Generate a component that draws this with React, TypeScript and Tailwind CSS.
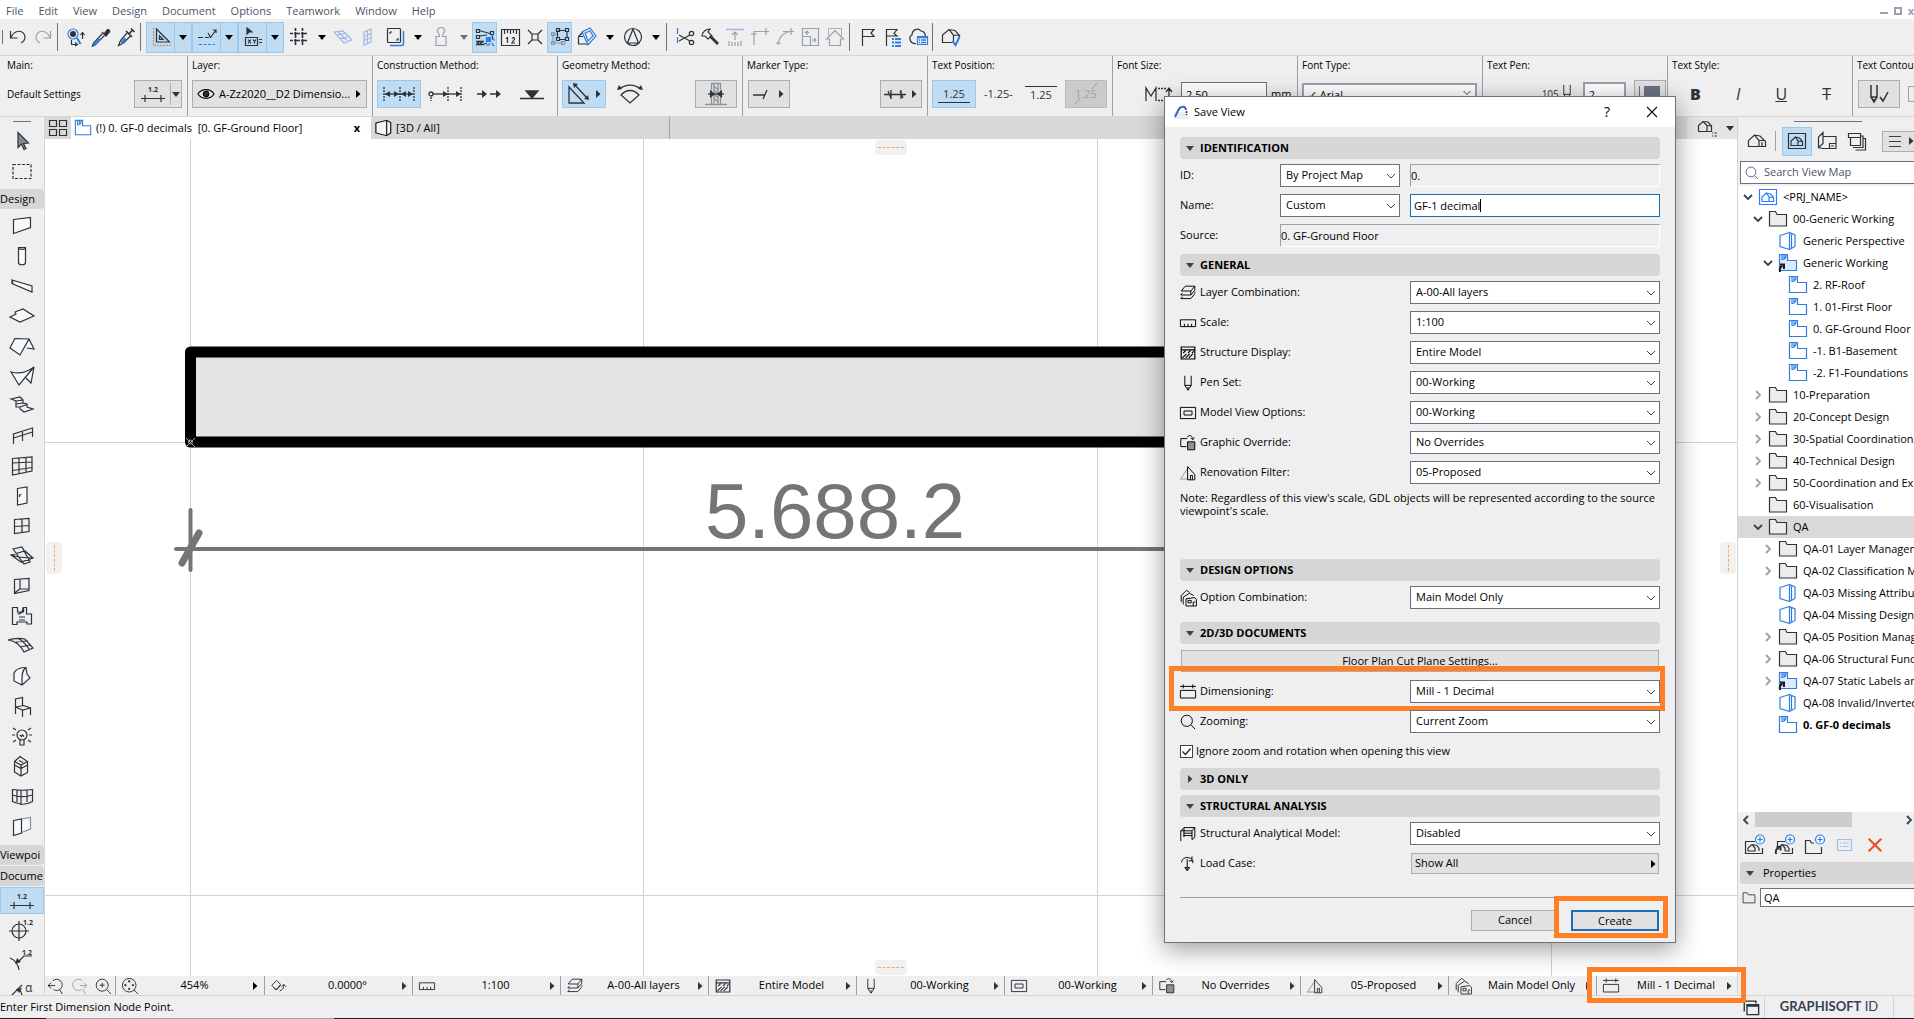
import { useState, type ReactNode } from 'react';

const BLUE = '#2f7de1';
const INK = '#2b333b';

// 20x20 line drawings, stroked with the current text colour
const icons: Record<string, ReactNode> = {
  undo: <path d="M2.500 4v7h7M2.500 11C5 6 9 3.500 13 4.500c4 1.500 5 6 3 9-1 1.500-2 2-3 2.500" />,
  redo: <path d="M17.500 4v7h-7M17.500 11C15 6 11 3.500 7 4.500c-4 1.500-5 6-3 9 1 1.500 2 2 3 2.500" />,
  find: (
    <>
      <circle cx="7" cy="7" r="5" stroke={BLUE} />
      <circle cx="7" cy="7" r="3" fill={INK} stroke="none" />
      <path d="m11 11 3.500 6" stroke={BLUE} strokeWidth="2" />
      <path d="M16.500 12V6m-2 2 2-2.500 2 2.500M5.500 13v4.500H11m-2-2 2.500 2-2.500 1.500" />
    </>
  ),
  dropper: (
    <>
      <path d="m11 5 4 4M13 7l3-4c1-1.500 3.500.5 2.500 2L15 9z" fill={INK} />
      <path d="m11.500 6.500-9 9.500L1.500 19l3-1.500 9-9" />
      <path d="m8.500 12-5.500 6" stroke={BLUE} strokeWidth="3" />
    </>
  ),
  syringe: (
    <>
      <path d="m10 4 6 6M13 7l3.500-4M15 1.500l3.500 3.500" strokeWidth="1.600" />
      <path d="m11 6-6.500 7.500-2 5 5-2.500 7-7" />
      <path d="m9.500 11.500-4 4.500" stroke={BLUE} strokeWidth="3" />
    </>
  ),
  guide: (
    <>
      <path d="M2.500 1v17.500H20" stroke="#e08a3c" strokeDasharray="2 1" />
      <path d="M5.500 2v13h13zM8.500 9v3.500H12z" />
    </>
  ),
  snapguide: (
    <>
      <path d="M1 10.500h5m2 0h4M11 6l2.500 4.500L19 3M16 3h3v3" />
      <path d="M2 17.500h16" stroke={BLUE} strokeDasharray="3 1.500" />
    </>
  ),
  coords: (
    <>
      <path d="M4 1v6l2-2h3zM4 1l5 4" fill={INK} />
      <path d="M2.500 10.500h12v8h-12zM5 12.500l3 4m0-4-3 4m5-4 1.500 2 1.500-2m-1.500 2v2" />
      <path d="M16 12.500h3M16 15.500h3" />
    </>
  ),
  hash: <path d="M6.500 1v4m0 3v4m0 3v4M13.500 1v4m0 3v4m0 3v4M1 6.500h4m3 0h4m3 0h4M1 13.500h4m3 0h4m3 0h4M5 6.500h3m4 0h3M5 13.500h3m4 0h3M6.500 5v3m7-3v3m-7 4v3m7-3v3" strokeWidth="1.600" strokeDasharray="3 1" />,
  gridplane: <path d="m1 5 9-1 9 9-8 3zM5 4.500l10 10M4 8l9-2M7 11.500l9-2" stroke="#9db8e6" />,
  gridwall: <path d="M6 5 13 2v13l-7 3zM9.500 3.500v13M6 9.500 13 6.500M6 13.500l7-3" stroke="#9db8e6" />,
  copies: (
    <>
      <path d="M5 18.500h11.500c1 0 2-1 2-2V4" stroke={BLUE} strokeWidth="1.500" />
      <rect x="2.500" y="1.500" width="13" height="14" rx="1" />
      <path d="M5 5h2M5 5v2m8 4v2h-2" />
    </>
  ),
  stamp: <path d="M5 9.500h3.500C9 7 6.500 6 6.500 4a3.500 3.500 0 0 1 7 0c0 2-2.500 3-2 5.500H15v9H5z" />,
  snapedge: (
    <>
      <path d="m4 3.500 11 3M4 9l8-1M9 17l3-1M17 8l1 5" />
      <path d="M1.500 2.500h3v3h-3zM1.500 8.500h3v3h-3zM15.500 4.500h3v3h-3z" />
      <path d="M1 17.500h8M1 14.500h8M2 17l3-3m0 3 3-3" strokeWidth="1.500" />
      <path d="M11.500 10.500h4v4h-4z" fill={BLUE} stroke={BLUE} />
      <path d="m16.500 16 2.500 3m-7-2v2m6-6h2m-3-4 2-2m-5 9v3" stroke={BLUE} />
    </>
  ),
  ruler12: (
    <>
      <path d="M1.500 2.500h18v16h-18zM4.500 3v4m3-4v3m3-3v4m3-4v3m3-3v4" />
      <path d="m6 11.500 1.500-1V16M12 11.500c1-1.500 3-1 2.500.5L12 16h3" />
    </>
  ),
  snappoint: <path d="M7 7h6v6H7zM3 3l4 4m6 6 4 4M17 3l-4 4m-6 6-4 4" />,
  ghost: (
    <>
      <path d="M3 7v9h10M3 7h4" stroke="#8a99a5" />
      <path d="M1.500 5.500h3v3h-3zm0 9h3v3h-3zm10 0h3v3h-3z" stroke="#8a99a5" />
      <path d="M8 3.500h8M7.500 5v6m9.500-6v6M9 12.500h7" />
      <path d="M6.500 1.500h3v3h-3zm9 0h3v3h-3zm0 9h3v3h-3zm-9 0h3v3h-3z" />
    </>
  ),
  cutplane: (
    <>
      <path d="M1.500 9.500 6 5M1.500 9.500v7.500H12M1.500 9.500H6" />
      <path d="m5 5 8-4 6 8-8 9zM8 6l5-2 3 5-5 5zM8 6l3 8" stroke={BLUE} />
    </>
  ),
  north: <path d="M10 1.500a8.500 8.500 0 1 0 0 17 8.500 8.500 0 0 0 0-17M10 2l5.500 14h-11z" />,
  scissors: (
    <>
      <path d="M2.500 1v16" stroke={BLUE} strokeDasharray="6 3" />
      <path d="m4 8 11 6M4 14l11-6" />
      <circle cx="16.500" cy="6.500" r="2.200" />
      <circle cx="16.500" cy="15.500" r="2.200" />
    </>
  ),
  axe: (
    <>
      <path d="M2 9c0-4 4-7 8-7l-2 3 4 4-4 3-3-3z" />
      <path d="m10 9 8 8" strokeWidth="2.600" />
    </>
  ),
  adjust: (
    <>
      <path d="M1 2.500h18" stroke="#9db8e6" strokeWidth="1.500" />
      <path d="M10 13V5M7 8l3-3 3 3M4 14v5m3-4v4m3-4v4m3-4v4m3-5v5" />
    </>
  ),
  corner: <path d="M4 18V4.500h15M16 1v7M1 7h6" />,
  fillet: <path d="M3 18C4 10 8 5 17 4.500M16 1v7M8 4.500h11M1 16h5" />,
  resize: <path d="M2.500 1.500h16v17h-16zM2.500 9.500h8v9M7 8V4M5 6l2-2 2 2M12 13h4m-2-2 2 2-2 2" />,
  houseup: (
    <>
      <path d="M3.500 9V1.500h13V9" strokeWidth=".8" />
      <path d="m1.500 12 8.500-8.500 8.500 8.500h-3v6.500h-11V12z" />
    </>
  ),
  flag: <path d="M4.500 19V2.500H16l-3 3.500 3 3.500H4.500" />,
  flaglist: (
    <>
      <path d="M3.500 19V2.500H14l-3 4 3 2.500H3.500" />
      <path d="M9 12h2m1 0h6M9 15.500h2m1 0h6M9 19h2m1 0h6" stroke={BLUE} strokeWidth="2" />
    </>
  ),
  cloud: (
    <>
      <path d="M8 16.500C2 17 0 10 4 8c0-5 6-8 9-4 3 0 5 3 4 6" />
      <path d="M9.500 9.500h10v8h-10z" stroke={BLUE} />
      <path d="M9.500 10.500h10M11 13h1m1 0h5m-7 2.500h1m1 0h5" stroke={BLUE} strokeWidth="1.500" />
    </>
  ),
  house: <path d="M1.500 15.500V9.500L7.500 4 12 9.500v6zM7.500 4 13 5l5.500 5.500v5H12M12 9.500l5.500 0M15 11v4.500" />,
  housecheck: (
    <>
      <path d="M11.500 15.500h-10V8L8 2.500 12.500 8v7.500M8 2.500l6 1 4.500 5v2M12.500 8l6 .5" />
      <path d="m11.500 14 3 4 4-8" stroke={BLUE} strokeWidth="2" />
    </>
  ),
  arrow: <path d="M6 1.500v15l3.500-3.500 2.500 5.500 2-1-2.500-5 5-.5z" fill="#868c91" />,
  marquee: <path d="M1 3.500h18v14H1z" strokeDasharray="3 1.500" />,
  wall: <path d="m1.500 3.500 17-2v10l-17 6z" fill="#f8f9fa" />,
  column: (
    <>
      <path d="M6.500 1.500v15c0 3 7 3 7 0v-15z" fill="#f8f9fa" />
      <path d="M6.500 2.500c2 1 5 1 7 0" />
    </>
  ),
  beam: <path d="m0 4 20 6v6L1 8zM0 4v4" fill="#f8f9fa" />,
  slab: <path d="m-2 11 6-3-1-2 8-3 11 7-14 6z" fill="#f8f9fa" />,
  roof: <path d="M3 2.500-2 12l10 7 9-16zM17 3l5 10-7-1" fill="#f8f9fa" />,
  shell: <path d="m-1 6 8 13L22 1C14 7 6 8-1 6zM22 1l-3 16-5-5" fill="#f8f9fa" />,
  stair: <path d="m-1 3 9-2 3 3v3l4 1v3l6 2-9 3-4-3v-2l-4 0V8H4V5zM4 5l7-1M8 11l7-2.500M4 8l7-1" />,
  railing: <path d="M1.500 18V8l19-6v9M1.500 12l19-6M10.500 6v9" />,
  curtain: <path d="M.500 2.500 20 1v14L.500 19zM.500 7 20 6M.500 14.500 20 11.500M7 2v15.500M14 2v14" />,
  door: <path d="M5.500 2.500 15 1v16l-9.500 2zM7.500 11v-2l2-.500" fill="#f8f9fa" />,
  window: <path d="M2.500 3.500 17 2.500v13l-14.500 2zM2.500 10.500l14.500-1M10 3v13.500" />,
  skylight: <path d="m-1 9 14-4 8 7-12 4zM1 3l9-2 8 15-6 2zM-1 9c6 2 15 3 22 3" />,
  opening: <path d="M2.500 3.500 17 2.500v12l-14.500 3zM8 3v10h9M8 13l-5.500 4" />,
  zone: <path d="M.500 1.500h5V6h6V1.500h3V8h5v10H15v-2H5v2.500H.500zM7 11h6M7 14h6M5.500 8C9 8 11 6 11 1.500" />,
  mesh: <path d="M-4 4c6-2 12-2 17-1l8 9-9 4C8 9 4 5-4 4zM4 6l12-1M8 11l10-2M6 2.500C12 5 13 8 17 13" />,
  morph: <path d="M2 7C4 3 8 1.500 14 1.500L15 8l3 4-8 7-8-4zM14 1.500C9 5 10 12 10 19" fill="#f8f9fa" />,
  chair: <path d="M3.500 18V3l7-1.500V10M3.500 11l8-1.500L18.500 12v7M3.500 11l7 3 8-2M10.500 14v7" />,
  lamp: (
    <>
      <circle cx="10" cy="9" r="5" />
      <path d="M8 13.500V19h4v-5.500M8 9l1.500 1.500L10.500 9l1.500 1.500M1 2l3 2M0 9h3M1 16l3-2M19 2l-3 2M20 9h-3M19 16l-3-2" />
    </>
  ),
  cabinet: <path d="M2.500 5.500 8 .500l7.500 5v11L9 20l-6.500-4zM2.500 5.500 9 9l6.500-3.500M9 9v11M2.500 9l6.500 3.500L15.500 9M7 4.500l4 2" />,
  curvewall: <path d="M.500 3.500c6 1 13 1 20 0v12c-5 3-8 3-11 3l-9-3zM.500 9c6 2 13 2 20 0M5 4v12M9 4v14M15 4v12" />,
  wallend: (
    <>
      <path d="m9.500 3 9-1.500V13l-9 3.500" stroke="#8d9297" fill="#f8f9fa" />
      <path d="m1.500 4.500 8-1.500v14l-8 2.500z" fill="#f8f9fa" />
    </>
  ),
  layers: <path d="m1.500 7.500 5-6h12l-5 6zM3 10l-2 2.500h12.500l5-6M3 14.500 1 17h12.500l5-6M13.500 7.500v5M18.500 1.500v5m0 4v-2" />,
  scale: <path d="M.500 6h19v8.500H.500zM5.500 11v3.500M10 11v3.500M14.500 11v3.500" />,
  structure: <path d="M1.500 2.500h17v15h-17zM1.500 6h17M3 16l5-5m-1 5 5-5m-1 5 5-5M4 10l3-3m3 3 3-3m2 3 2-2" strokeWidth="1.500" />,
  pen: <path d="M6 1v12l4 6 4-6V1M6 13h8M10 15v4" />,
  modelview: <path d="M.500 3h19v14H.500zM5 7.500h10v5H5z" />,
  override: (
    <>
      <path d="M8 14.500H1v-10h8M9 2.500c3-3 6-2 7 2m-2.500-1 2.500 2.500L18 3" />
      <path d="M9.500 8.500h9v10h-9z" fill="#8d9297" />
    </>
  ),
  renovation: (
    <>
      <path d="M0 17.500h9M1 17 9 5" stroke="#8d9297" />
      <path d="M9.500 18.500V2l9 10v6.500zM13 18v-5h2.500v5" />
    </>
  ),
  options: <path d="M1.500 15V7L8 .500l4 2.500M4 18V9l8-5 5 3M7.500 20V11l11-1.500 2 2V20zM10 13h4v3h-4zM16.500 20v-5H19" />,
  dimension: <path d="M0 3h20M4 .500v5M16 .500v5M.500 8h19v9.500H.500z" />,
  zoom: <path d="M8.500 1.500a7 7 0 1 0 0 14 7 7 0 0 0 0-14M14 14l5 5" />,
  analytic: <path d="M1 19V6l4-4h13.500v12L15 17V6M1 6h14M5 2v12M4 9h11M4 12h11M18.500 2 15 6" />,
  loadcase: <path d="M2 8C2 2 10 0 15 4m0-3.500V6h-4M9 4v14m-3-3.500 3 4 3-4zM16 9V5" />,
  folder: <path d="M1.500 17V2.500h6l1.500 3h9.500V17z" fill="#ececee" />,
  persp: <path d="M2 4.500 11.500 1.500v17L2 15.500zM11.500 1.500 17 4v11.500l-5.500 3M13.500 2.500v15" stroke={BLUE} />,
  plan: (
    <>
      <path d="M1.500 17.500v-16h8v6h9v10z" stroke={BLUE} fill="#fff" />
      <path d="M4 2v4.500C6 6.500 8 5 8 2M6 2v3" stroke={BLUE} />
    </>
  ),
  planlink: (
    <>
      <path d="M1.500 17.500v-16h8v6h9v10z" stroke={BLUE} fill="#dcebfb" />
      <path d="M4 2v4.500C6 6.500 8 5 8 2M6 2v3" stroke={BLUE} />
      <path d="M2 19c-.500-4 0-5 2.500-6M2 11.500h4V16" stroke="#1b1f23" strokeWidth="2" />
    </>
  ),
  viewmap: <path d="M1.500 2.500h17v15h-17zM4 14.500V10l4.500-4 2.500 4v4.500zM8.500 6l4 1 3 3.500v4H11M11 10l4 .5" />,
  layout: <path d="M1.500 16.500V6L6 1.500v11zM6 5.500h13v12H6l-4.500-1M12.500 17.500v-5H19M14 15h3" />,
  publisher: <path d="M1.500 2.500h12v4h-12zM3.500 6.500v8h10v-8M13.500 5h2.500v11.500H6M16 7.500h2.500V19H8.500" />,
  popnav: <path d="M1.500 13.500V7.500L6 3.500l4 4v6zM6 3.500l5 .500 3.500 4v5.500H10M10 7.500l4 .500M15 15h1m1.500 0h2.500m-5 3h1m1.500 0h2.500" />,
  addview: (
    <>
      <path d="M11 6.500H1.500v12h17V13M4 16v-3l4-3.500 3 3.500v3zM8 9.500l5 1 2 3V16" />
      <circle cx="16" cy="4.500" r="4.500" stroke={BLUE} fill="#f4f8fd" />
      <path d="M16 2v5M13.500 4.500h5" stroke={BLUE} />
    </>
  ),
  cloneview: (
    <>
      <path d="M11 6.500H3.500v5m4 7h11V13M8 9.500l5 1 2 3V16h-4m-5-5 2-1.500 3 3.500v3" />
      <path d="M2 19c-.500-4 0-5 3-6M2.500 12h4v3.500" strokeWidth="2" />
      <circle cx="16" cy="4.500" r="4.500" stroke={BLUE} fill="#f4f8fd" />
      <path d="M16 2v5M13.500 4.500h5" stroke={BLUE} />
    </>
  ),
  addfolder: (
    <>
      <path d="M10 8H7.500L6 5.500H1.500v13h16V12" />
      <circle cx="16" cy="4.500" r="4.500" stroke={BLUE} fill="#f4f8fd" />
      <path d="M16 2v5M13.500 4.500h5" stroke={BLUE} />
    </>
  ),
  props: <path d="M3.500 4.500h14v11h-14zM6 8h1.500M9 8h6M6 11.500h1.500M9 11.500h6" stroke="#9dbff0" />,
  cross: <path d="m1 1 18 18M19 1 1 19" stroke="#e8502a" strokeWidth="3" />,
  windows: <path d="M5.500 7.500h13v11h-13zM5.500 9h13M2.500 15V3.500h13V6" strokeWidth="1.500" />,
  zoomback: <path d="M6 3.500a7 7 0 1 1 1 11M0 9.500h9M4 6l-4 3.500L4 13M14.500 14.500 18 20" />,
  zoomfwd: <path d="M14 3.500a7 7 0 1 0-1 11M11 9.500h9M16 6l4 3.500-4 3.500M14.500 14.500 18 20" />,
  zoomin: <path d="M9 1.500a7.500 7.500 0 1 0 0 15 7.500 7.500 0 0 0 0-15M14.500 14.500 20 20M9 6v6M6 9h6" />,
  zoomfit: <path d="M9 .500a8.500 8.500 0 1 0 0 17 8.500 8.500 0 0 0 0-17M15 15l5 5M9 3v3M9 12v3M3 9h3M12 9h3M8 5l1-2 1 2M8 13l1 2 1-2M5 8 3 9l2 1M13 8l2 1-2 1" />,
  orient: <path d="m1 9 6-6 5 5-6 7zM4 12l3 3 5-6M11 16c4-1 5-4 5-8m-3 3 3-3 3 3" />,
  grid4: <path d="M1.500 2.500h7v6h-7zm10 0h7v6h-7zm-10 9h7v6h-7zm10 0h7v6h-7z" />,
  box3d: <path d="M1 4.500 13 1.500v17L1 15.500zM13 1.500 17.500 4v11.500l-4.500 3" fill="#f4f4f4" />,
  eye: (
    <>
      <path d="M1 10c4-6.500 14-6.500 18 0-4 6.500-14 6.500-18 0z" />
      <circle cx="10" cy="10" r="3" fill={INK} />
    </>
  ),
  penset: <path d="M2 1v12l3 5 3-5V1M2 13h6M5 15v3M11 13l3 4 5-9" strokeWidth="1.500" />,
};

const sizes: Record<number, string> = {
  14: 'size-[14px]',
  16: 'size-4',
  18: 'size-[18px]',
  20: 'size-5',
};

function Icon({ name, size = 20 }: { name: string; size?: number }) {
  return (
    <svg viewBox="0 0 20 20" className={`${sizes[size]} shrink-0 overflow-visible`} fill="none" stroke="currentColor" strokeWidth="1.2">
      {icons[name]}
    </svg>
  );
}

function Caret({ dir = 'down' }: { dir?: 'down' | 'right' }) {
  return (
    <svg viewBox="0 0 8 8" className="size-2 shrink-0" fill="currentColor">
      <path d={dir === 'down' ? 'M0 2h8L4 7z' : 'M2 0l4.500 4L2 8z'} />
    </svg>
  );
}

const menus = ['File', 'Edit', 'View', 'Design', 'Document', 'Options', 'Teamwork', 'Window', 'Help'];

function MenuBar() {
  return (
    <nav className="flex h-[19px] shrink-0 items-center gap-[15px] bg-white pt-[3px] pl-[6px] text-[11px] leading-4 text-gray-600">
      {menus.map((m) => (
        <button key={m} type="button">{m}</button>
      ))}
      <div className="ml-auto flex items-center gap-[6px] text-gray-400">
        <button type="button" aria-label="Minimize" className="mt-1 h-[2px] w-2 bg-gray-400" />
        <button type="button" aria-label="Restore" className="size-2 border-2 border-gray-400" />
        <button type="button" aria-label="Close" className="text-[11px] leading-4 font-bold">x</button>
      </div>
    </nav>
  );
}

type Tool = { icon?: string; kind: 'btn' | 'sep' | 'split' | 'drop'; on?: boolean; dim?: boolean };

const tools: Tool[] = [
  { icon: 'undo', kind: 'btn' },
  { icon: 'redo', kind: 'btn', dim: true },
  { kind: 'sep' },
  { icon: 'find', kind: 'btn' },
  { icon: 'dropper', kind: 'btn' },
  { icon: 'syringe', kind: 'btn' },
  { kind: 'sep' },
  { icon: 'guide', kind: 'split' },
  { icon: 'snapguide', kind: 'split' },
  { icon: 'coords', kind: 'split' },
  { icon: 'hash', kind: 'drop' },
  { icon: 'gridplane', kind: 'btn' },
  { icon: 'gridwall', kind: 'btn' },
  { icon: 'copies', kind: 'drop' },
  { icon: 'stamp', kind: 'drop', dim: true },
  { icon: 'snapedge', kind: 'btn', on: true },
  { icon: 'ruler12', kind: 'btn' },
  { icon: 'snappoint', kind: 'btn' },
  { icon: 'ghost', kind: 'btn', on: true },
  { icon: 'cutplane', kind: 'drop' },
  { icon: 'north', kind: 'drop' },
  { kind: 'sep' },
  { icon: 'scissors', kind: 'btn' },
  { icon: 'axe', kind: 'btn' },
  { icon: 'adjust', kind: 'btn', dim: true },
  { icon: 'corner', kind: 'btn', dim: true },
  { icon: 'fillet', kind: 'btn', dim: true },
  { icon: 'resize', kind: 'btn', dim: true },
  { icon: 'houseup', kind: 'btn', dim: true },
  { kind: 'sep' },
  { icon: 'flag', kind: 'btn' },
  { icon: 'flaglist', kind: 'btn' },
  { icon: 'cloud', kind: 'btn' },
  { kind: 'sep' },
  { icon: 'housecheck', kind: 'btn' },
];

function Toolbar() {
  return (
    <div className="flex h-[37px] shrink-0 items-center border-b border-[#d5d5d5] bg-[#efefef]">
      <span className="mr-[2px] ml-[2px] h-[14px] w-px bg-gray-500" />
      {tools.map((t, i) => {
        if (t.kind === 'sep') {
          return <span key={i} className="mr-[5px] ml-[2px] h-[28px] w-px bg-gray-500" />;
        }
        const color = t.dim ? 'text-gray-400' : 'text-[#2b333b]';
        if (t.kind === 'btn') {
          return (
            <button
              key={i}
              type="button"
              aria-label={t.icon}
              className={`flex h-[31px] w-[25px] items-center justify-center ${color} ${t.on ? 'border border-[#99c9ee] bg-[#bfdcf3]' : ''}`}
            >
              <Icon name={t.icon!} />
            </button>
          );
        }
        const split = t.kind === 'split';
        return (
          <button
            key={i}
            type="button"
            aria-label={t.icon}
            className={`flex h-[31px] w-[46px] items-center ${color} ${split ? 'border border-[#99c9ee] bg-[#bfdcf3]' : ''}`}
          >
            <span className={`flex h-full flex-1 items-center justify-center ${split ? 'border-r border-[#99c9ee]' : ''}`}>
              <Icon name={t.icon!} />
            </span>
            <span className={`flex w-4 justify-center ${t.dim ? 'text-gray-500' : 'text-black'}`}>
              <Caret />
            </span>
          </button>
        );
      })}
    </div>
  );
}

function InfoCell({ label, children }: { label: string; children: ReactNode }) {
  return (
    <section className="flex h-full w-[185px] shrink-0 flex-col border-l border-gray-400 pt-[2px] pl-1">
      <h2 className="text-[10px] leading-[14px] whitespace-nowrap text-black">{label}</h2>
      <div className="mt-2 flex h-7 items-center pr-[5px]">{children}</div>
    </section>
  );
}

const grayBtn = 'flex h-7 shrink-0 items-center justify-center border border-[#adadad] bg-[#e1e1e1]';
const blueBtn = 'flex h-7 w-11 shrink-0 items-center justify-center gap-1 border border-[#99c9ee] bg-[#bfdcf3]';

function DimGlyph() {
  return (
    <svg viewBox="0 0 24 20" className="h-5 w-6" fill="none" stroke="currentColor" strokeWidth="1.2">
      <path d="M0 14.500h24M4 11v7m16-7v7" />
      <text x="12" y="8" textAnchor="middle" fontSize="7" fontWeight="700" fill="currentColor" stroke="none">1.2</text>
    </svg>
  );
}

function InfoBox() {
  return (
    <div className="flex h-[61px] shrink-0 overflow-hidden border-b border-[#d5d5d5] bg-[#efefef] text-[#2b333b]">
      <section className="flex w-[187px] shrink-0 flex-col pt-[2px] pl-[7px]">
        <h2 className="text-[10px] leading-[14px] text-black">Main:</h2>
        <div className="mt-2 flex h-7 items-center justify-between pr-[5px] text-[10px] text-black">
          Default Settings
          <button type="button" aria-label="Default settings" className={`${grayBtn} w-12 text-[#2b333b]`}>
            <span className="flex w-[35px] justify-center"><DimGlyph /></span>
            <span className="flex h-[22px] flex-1 items-center justify-center border-l border-[#adadad]"><Caret /></span>
          </button>
        </div>
      </section>
      <InfoCell label="Layer:">
        <button type="button" className={`${grayBtn} w-full gap-1 px-1 text-[11px] whitespace-nowrap text-black`}>
          <Icon name="eye" size={18} />
          <span className="flex-1 text-left">A-Zz2020__D2 Dimensio...</span>
          <Caret dir="right" />
        </button>
      </InfoCell>
      <InfoCell label="Construction Method:">
        <button type="button" aria-label="Linear" className={blueBtn}>
          <svg viewBox="0 0 32 16" className="h-4 w-8" fill="none" stroke="currentColor" strokeWidth="1.300">
            <path d="M1 1v14M17 1v14M31 1v14" strokeDasharray="2 1" />
            <path d="M2 8h28" />
            <path d="m2 8 5-3v6zM16 8l-5-3v6zM18 8l5-3v6zM30 8l-5-3v6z" fill="currentColor" stroke="none" />
          </svg>
        </button>
        <button type="button" aria-label="Cumulative" className="ml-1 flex w-10 justify-center">
          <svg viewBox="0 0 34 16" className="h-4 w-[34px]" fill="none" stroke="currentColor" strokeWidth="1.300">
            <circle cx="3" cy="8" r="2" />
            <path d="M3 11v4M20 1v14M33 1v14" strokeDasharray="2 1" />
            <path d="M5 8h27" />
            <path d="m20 8-5-3v6zM33 8l-5-3v6z" fill="currentColor" stroke="none" />
          </svg>
        </button>
        <button type="button" aria-label="Baseline" className="ml-1 flex w-10 justify-center">
          <svg viewBox="0 0 24 16" className="h-4 w-6" fill="none" stroke="currentColor" strokeWidth="1.300">
            <path d="M0 8h8M13 8h8" />
            <path d="m10 8-5-4v8zM24 8l-5-4v8z" fill="currentColor" stroke="none" />
          </svg>
        </button>
        <button type="button" aria-label="Elevation" className="ml-1 flex w-10 justify-center">
          <svg viewBox="0 0 24 16" className="h-4 w-6" fill="currentColor" stroke="currentColor" strokeWidth="1.300">
            <path d="M0 12.500h24M6 5h12l-6 7z" />
          </svg>
        </button>
      </InfoCell>
      <InfoCell label="Geometry Method:">
        <button type="button" aria-label="Any direction" className={blueBtn}>
          <svg viewBox="0 0 24 22" className="h-[22px] w-6" fill="none" stroke="currentColor" strokeWidth="1.300">
            <path d="M3 4v16h15zM9 2l12 13" />
            <path d="m7 0 5 1-4 4zM23 17l-5-1 4-4z" fill="currentColor" stroke="none" />
          </svg>
          <Caret dir="right" />
        </button>
        <button type="button" aria-label="Arc" className="ml-2 flex w-8 justify-center">
          <svg viewBox="0 0 26 20" className="h-5 w-[26px]" fill="none" stroke="currentColor" strokeWidth="1.300">
            <path d="M2 5c7-5 15-5 22 0M4 11c5-6 13-6 18 0l-9 8z" />
            <path d="M0 6 2 1l3 4zM26 6l-2-5-3 4z" fill="currentColor" stroke="none" />
          </svg>
        </button>
        <button type="button" aria-label="Wall thickness" className={`${grayBtn} ml-auto w-[42px]`}>
          <svg viewBox="0 0 24 24" className="size-6" fill="none" stroke="#8d9297" strokeWidth="1.300">
            <path d="M7.500 1.500h9v21h-9zM1 22.500h22M10 2v20M14 2v20M10 4l4 4m-4 0 4 4m-4 0 4 4m-4 0 4 4" />
            <path d="M4 12h16" stroke="#2b333b" />
            <path d="m6 8 5 4-5 4zM18 8l-5 4 5 4z" fill="#2b333b" stroke="none" />
          </svg>
        </button>
      </InfoCell>
      <InfoCell label="Marker Type:">
        <button type="button" aria-label="Slash" className={`${grayBtn} ml-px w-[42px] gap-2`}>
          <svg viewBox="0 0 16 12" className="h-3 w-4" fill="none" stroke="currentColor" strokeWidth="1.300">
            <path d="M0 7h12M10 11l4-9" />
          </svg>
          <Caret dir="right" />
        </button>
        <button type="button" aria-label="Dimension marks" className={`${grayBtn} ml-auto w-[42px] gap-1`}>
          <svg viewBox="0 0 22 12" className="h-3 w-[22px]" fill="none" stroke="currentColor" strokeWidth="1.300">
            <path d="M0 6.500h22M4 3l3 7M7 2v9M16 3l3 7M17 2v9" />
          </svg>
          <Caret dir="right" />
        </button>
      </InfoCell>
      <InfoCell label="Text Position:">
        <button type="button" className={`${blueBtn} text-[11px]`}>
          <span className="w-8 border-b border-[#2b333b] leading-4">1.25</span>
        </button>
        <button type="button" className="ml-2 text-[11px]">-1.25-</button>
        <button type="button" className="ml-3 w-8 border-t border-[#2b333b] text-[11px] leading-4">1.25</button>
        <button type="button" disabled className="relative ml-auto flex h-7 w-[42px] shrink-0 items-center justify-center border border-[#bcbcbc] bg-[#cbcbcb] text-[11px] text-gray-400">
          1.25
          <svg viewBox="0 0 40 26" className="absolute inset-0 size-full" fill="none" stroke="currentColor">
            <path d="m9 23 5-6M26 8l5-6" />
          </svg>
        </button>
      </InfoCell>
      <InfoCell label="Font Size:">
        <svg viewBox="0 0 28 16" className="mr-2 ml-[28px] h-4 w-7 shrink-0" fill="none" stroke="currentColor" strokeWidth="1.300">
          <path d="M1 15V2l5 8 5-8v13M24 3v10M21 6l3-4 3 4" />
          <path d="M13 2.500h9M13 14.500h9" strokeDasharray="2 1" />
        </svg>
        <input aria-label="Font size" defaultValue="2.50" className="h-6 w-[86px] border border-gray-500 bg-white px-1 text-[11px] text-black" />
        <span className="ml-1 text-[11px] text-black">mm</span>
      </InfoCell>
      <InfoCell label="Font Type:">
        <div className="relative w-full">
          <select aria-label="Font type" className="h-6 w-full appearance-none border-2 border-gray-400 bg-white px-1 text-[11px] text-black">
            <option>✓ Arial</option>
          </select>
          <svg viewBox="0 0 8 6" className="pointer-events-none absolute top-[9px] right-[6px] h-[6px] w-2" fill="none" stroke="#444">
            <path d="m.500 1 3.500 3.500L7.500 1" />
          </svg>
        </div>
      </InfoCell>
      <InfoCell label="Text Pen:">
        <span className="ml-[52px] text-[10px]">.105</span>
        <span className="mr-2 flex h-5"><Icon name="pen" size={16} /></span>
        <input aria-label="Text pen" defaultValue="2" className="h-6 w-[43px] border-2 border-gray-400 bg-white px-1 text-[11px] text-black" />
        <button type="button" aria-label="Pen colour" className={`${grayBtn} ml-2 w-8 gap-1`}>
          <span className="h-4 w-px bg-gray-500" />
          <span className="size-4 bg-gray-500" />
        </button>
      </InfoCell>
      <InfoCell label="Text Style:">
        <div className="flex w-full justify-between pr-4 pl-[18px] text-base">
          <button type="button" className="font-extrabold">B</button>
          <button type="button" className="italic">I</button>
          <button type="button" className="underline">U</button>
          <button type="button" className="line-through">T</button>
        </div>
      </InfoCell>
      <InfoCell label="Text Contour Line:">
        <button type="button" aria-label="Contour pen" className={`${grayBtn} ml-px w-[42px]`}><Icon name="penset" /></button>
        <span className="ml-2 size-4 shrink-0 border border-gray-400" />
      </InfoCell>
    </div>
  );
}

const designTools = [
  'wall', 'column', 'beam', 'slab', 'roof', 'shell', 'stair', 'railing', 'curtain', 'door', 'window',
  'skylight', 'opening', 'zone', 'mesh', 'morph', 'chair', 'lamp', 'cabinet', 'curvewall', 'wallend',
];

function ToolCell({ name }: { name: string }) {
  return (
    <button type="button" aria-label={name} className="flex h-[30px] w-full shrink-0 items-center justify-center">
      <Icon name={name} />
    </button>
  );
}

const groupHead = 'h-5 w-full shrink-0 overflow-hidden rounded-r bg-[#d6d6d6] text-left text-[11px] text-black';

function Toolbox() {
  return (
    <aside className="flex w-[45px] shrink-0 flex-col overflow-hidden border-r border-[#d5d5d5] bg-[#efefef] text-[#2b333b]">
      <span className="mx-auto mt-1 mb-1 h-px w-[18px] shrink-0 bg-gray-500" />
      <ToolCell name="arrow" />
      <ToolCell name="marquee" />
      <button type="button" className={`${groupHead} mt-[3px] mb-[2px]`}>Design</button>
      {designTools.map((t) => (
        <ToolCell key={t} name={t} />
      ))}
      <button type="button" className={`${groupHead} mt-1`}>Viewpoi</button>
      <button type="button" className={`${groupHead} mt-px`}>Docume</button>
      <button type="button" aria-label="Dimension" className="mt-px flex h-[27px] w-full shrink-0 items-center justify-center border border-[#99c9ee] bg-[#bfdcf3]">
        <DimGlyph />
      </button>
      <button type="button" aria-label="Level dimension" className="flex h-[30px] w-full shrink-0 items-center justify-center">
        <svg viewBox="0 0 26 24" className="h-6 w-[26px]" fill="none" stroke="currentColor" strokeWidth="1.200">
          <circle cx="10" cy="14" r="7" />
          <path d="M0 14h20M10 4v20" />
          <text x="14" y="8" fontSize="7" fontWeight="700" fill="currentColor" stroke="none">1.2</text>
        </svg>
      </button>
      <button type="button" aria-label="Radial dimension" className="flex h-[30px] w-full shrink-0 items-center justify-center">
        <svg viewBox="0 0 26 24" className="h-6 w-[26px]" fill="none" stroke="currentColor" strokeWidth="1.200">
          <path d="M1 11c5 2 8 5 9 12M9 15l6-6h8" />
          <path d="m6 17 2-6 4 4z" fill="currentColor" stroke="none" />
          <text x="13" y="8" fontSize="7" fontWeight="700" fill="currentColor" stroke="none">1.2</text>
        </svg>
      </button>
      <button type="button" aria-label="Angle dimension" className="flex h-[30px] w-full shrink-0 items-center justify-center">
        <svg viewBox="0 0 26 24" className="h-6 w-[26px]" fill="none" stroke="currentColor" strokeWidth="1.200">
          <path d="M1 20 13 8M9 11c3 3 4 5 4 8M1 20h12" />
          <path d="m7 12 6-1-3 5z" fill="currentColor" stroke="none" />
          <text x="16" y="15" fontSize="12" fill="currentColor" stroke="none">α</text>
        </svg>
      </button>
    </aside>
  );
}

function TabBar() {
  return (
    <div className="flex h-[22px] shrink-0 items-stretch bg-[#d8d8d8] text-[11px]">
      <button type="button" aria-label="Tab overview" className="flex w-[26px] items-center justify-center text-[#2b333b]">
        <Icon name="grid4" />
      </button>
      <div className="flex w-[300px] items-center gap-1 bg-white pr-2 pl-[3px] whitespace-pre">
        <Icon name="plan" size={18} />
        <span className="flex-1">(!) 0. GF-0 decimals  [0. GF-Ground Floor]</span>
        <button type="button" aria-label="Close tab" className="w-3 font-bold">x</button>
      </div>
      <button type="button" className="flex w-[299px] items-center gap-[3px] border-r border-gray-400 pl-1 text-left">
        <Icon name="box3d" size={18} />
        [3D / All]
      </button>
      <button type="button" aria-label="Navigator" className="ml-auto flex w-[50px] items-center justify-between bg-[#e4e4e4] pr-[3px] pl-[10px] text-[#2b333b]">
        <Icon name="popnav" />
        <Caret />
      </button>
    </div>
  );
}

function Canvas() {
  return (
    <div className="relative min-h-0 flex-1 overflow-hidden bg-white">
      {/* floor plan: grid, wall and its dimension line */}
      <svg className="absolute inset-0 size-full">
        <path d="M145.500 0v840M598.500 0v840M1052.500 0v840M1506.500 0v840M0 303.500h1700M0 756.500h1700" stroke="#d2d2d2" />
        <rect x="145.500" y="213" width="1200" height="90" fill="#e4e4e4" stroke="#000" strokeWidth="11" strokeLinejoin="round" />
        <g fill="none" stroke="#aaa">
          <circle cx="145.500" cy="303" r="2" />
          <path d="m141 299 9 9m0-9-9 9" />
        </g>
        <g stroke="#757575" strokeLinecap="round">
          <path d="M131 410h1200M145.500 371v60" strokeWidth="4" />
          <path d="m137 424 17-30" strokeWidth="7" />
        </g>
        <text x="790" y="399" textAnchor="middle" fontSize="78" fill="#757575" className="font-['Liberation_Sans',Arial,sans-serif]">5.688.2</text>
      </svg>
      <span className="absolute top-px left-1/2 flex h-[15px] w-8 -translate-x-1/2 items-center rounded bg-[#f1f1f1] px-[3px]">
        <span className="w-full border-t border-dashed border-[#f0a86c]" />
      </span>
      <span className="absolute bottom-px left-1/2 flex h-[15px] w-8 -translate-x-1/2 items-center rounded bg-[#f1f1f1] px-[3px]">
        <span className="w-full border-t border-dashed border-[#f0a86c]" />
      </span>
      <span className="absolute top-1/2 left-px flex h-8 w-4 -translate-y-1/2 justify-center rounded bg-[#f1f1f1] py-[3px]">
        <span className="border-l border-dashed border-[#f0a86c]" />
      </span>
      <span className="absolute top-1/2 right-px flex h-8 w-4 -translate-y-1/2 justify-center rounded bg-[#f1f1f1] py-[3px]">
        <span className="border-l border-dashed border-[#f0a86c]" />
      </span>
    </div>
  );
}

const quickOptions = [
  { icon: 'orient', text: '0.0000°' },
  { icon: 'scale', text: '1:100' },
  { icon: 'layers', text: 'A-00-All layers' },
  { icon: 'structure', text: 'Entire Model' },
  { icon: 'pen', text: '00-Working' },
  { icon: 'modelview', text: '00-Working' },
  { icon: 'override', text: 'No Overrides' },
  { icon: 'renovation', text: '05-Proposed' },
  { icon: 'options', text: 'Main Model Only' },
  { icon: 'dimension', text: 'Mill - 1 Decimal' },
];

function QuickOptions() {
  return (
    <div className="flex h-[19px] shrink-0 items-center bg-[#efefef] text-[11px] text-[#2b333b]">
      <button type="button" aria-label="Previous zoom" className="flex w-[22px] shrink-0 justify-center"><Icon name="zoomback" size={16} /></button>
      <button type="button" aria-label="Next zoom" className="flex w-6 shrink-0 justify-center text-gray-400"><Icon name="zoomfwd" size={16} /></button>
      <button type="button" aria-label="Zoom in" className="flex w-6 shrink-0 justify-center"><Icon name="zoomin" size={16} /></button>
      <span className="h-full w-px bg-gray-400" />
      <button type="button" aria-label="Fit in window" className="ml-[6px] flex w-4 shrink-0 justify-center"><Icon name="zoomfit" size={16} /></button>
      <button type="button" className="flex w-[126px] shrink-0 items-center pr-[5px] text-black">
        <span className="flex-1 text-center">454%</span>
        <Caret dir="right" />
      </button>
      {quickOptions.map((o) => (
        <button
          key={o.icon}
          type="button"
          className="flex h-full grow basis-[148px] items-center border-l border-gray-400 pr-1 pl-[6px] whitespace-nowrap last:basis-[141px]"
        >
          <Icon name={o.icon} size={16} />
          <span className="flex-1 pl-2 text-center text-black">{o.text}</span>
          <Caret dir="right" />
        </button>
      ))}
    </div>
  );
}

type Node = { level: 0 | 1 | 2 | 3; icon: string; text: string; open?: boolean; closed?: boolean; bold?: boolean; selected?: boolean };

const tree: Node[] = [
  { level: 0, icon: 'viewmap', text: '<PRJ_NAME>', open: true },
  { level: 1, icon: 'folder', text: '00-Generic Working', open: true },
  { level: 2, icon: 'persp', text: 'Generic Perspective' },
  { level: 2, icon: 'planlink', text: 'Generic Working', open: true },
  { level: 3, icon: 'plan', text: '2. RF-Roof' },
  { level: 3, icon: 'plan', text: '1. 01-First Floor' },
  { level: 3, icon: 'plan', text: '0. GF-Ground Floor' },
  { level: 3, icon: 'plan', text: '-1. B1-Basement' },
  { level: 3, icon: 'plan', text: '-2. F1-Foundations' },
  { level: 1, icon: 'folder', text: '10-Preparation', closed: true },
  { level: 1, icon: 'folder', text: '20-Concept Design', closed: true },
  { level: 1, icon: 'folder', text: '30-Spatial Coordination', closed: true },
  { level: 1, icon: 'folder', text: '40-Technical Design', closed: true },
  { level: 1, icon: 'folder', text: '50-Coordination and Export', closed: true },
  { level: 1, icon: 'folder', text: '60-Visualisation' },
  { level: 1, icon: 'folder', text: 'QA', open: true, selected: true },
  { level: 2, icon: 'folder', text: 'QA-01 Layer Management', closed: true },
  { level: 2, icon: 'folder', text: 'QA-02 Classification Management', closed: true },
  { level: 2, icon: 'persp', text: 'QA-03 Missing Attributes' },
  { level: 2, icon: 'persp', text: 'QA-04 Missing Design' },
  { level: 2, icon: 'folder', text: 'QA-05 Position Management', closed: true },
  { level: 2, icon: 'folder', text: 'QA-06 Structural Function', closed: true },
  { level: 2, icon: 'planlink', text: 'QA-07 Static Labels and Markers', closed: true },
  { level: 2, icon: 'persp', text: 'QA-08 Invalid/Inverted' },
  { level: 2, icon: 'plan', text: '0. GF-0 decimals', bold: true },
];

const indents = ['pl-0', 'pl-[10px]', 'pl-5', 'pl-[30px]'];

function Navigator() {
  return (
    <aside className="flex w-[177px] shrink-0 flex-col overflow-hidden border-l border-[#d5d5d5] bg-[#efefef] text-[11px]">
      <span className="mt-1 ml-14 h-px w-[68px] shrink-0 bg-gray-500" />
      <div className="mt-1 flex h-[30px] shrink-0 items-center text-[#2b333b]">
        <button type="button" aria-label="Project map" className="flex w-[37px] shrink-0 justify-center"><Icon name="house" /></button>
        <span className="h-5 w-px shrink-0 bg-gray-400" />
        <button type="button" aria-label="View map" className="ml-[6px] flex h-[29px] w-[30px] shrink-0 items-center justify-center border border-[#99c9ee] bg-[#bfdcf3]">
          <Icon name="viewmap" />
        </button>
        <button type="button" aria-label="Layout book" className="flex w-[30px] shrink-0 justify-center"><Icon name="layout" /></button>
        <button type="button" aria-label="Publisher" className="flex w-[30px] shrink-0 justify-center"><Icon name="publisher" /></button>
        <button type="button" aria-label="Navigator menu" className="ml-[10px] flex h-[21px] w-10 shrink-0 items-center gap-[6px] border border-[#adadad] bg-[#e1e1e1] pl-[6px]">
          <span className="flex w-3 flex-col gap-1">
            <span className="h-px bg-gray-700" />
            <span className="h-px bg-gray-700" />
            <span className="h-px bg-gray-700" />
          </span>
          <Caret dir="right" />
        </button>
      </div>
      <label className="mt-[5px] ml-[2px] flex h-[23px] shrink-0 items-center gap-[5px] border border-r-0 border-gray-500 bg-white pl-1 text-gray-600">
        <Icon name="zoom" size={14} />
        <input type="search" aria-label="Search View Map" placeholder="Search View Map" className="w-full outline-none placeholder:text-gray-600" />
      </label>
      <ul className="mt-[2px] min-h-0 flex-1 overflow-hidden bg-white">
        {tree.map((n) => (
          <li
            key={n.text}
            className={`flex h-[22px] items-center whitespace-nowrap ${indents[n.level]} ${n.selected ? 'bg-[#d9d9d9]' : ''} ${n.bold ? 'font-bold' : ''}`}
          >
            <span className="flex w-5 shrink-0 justify-center">
              {(n.open || n.closed) && (
                <svg viewBox="0 0 10 10" className={`size-[10px] ${n.open ? 'text-gray-700' : 'text-gray-400'}`} fill="none" stroke="currentColor" strokeWidth="1.800">
                  <path d={n.open ? 'm1 3 4 4 4-4' : 'm3 1 4 4-4 4'} />
                </svg>
              )}
            </span>
            <span className={`mr-[5px] ${n.level === 0 ? 'text-blue-500' : 'text-[#2b333b]'}`}>
              <Icon name={n.icon} />
            </span>
            {n.text}
          </li>
        ))}
      </ul>
      <div className="flex h-[15px] shrink-0 items-center justify-between pr-px pl-1 text-gray-700">
        <svg viewBox="0 0 8 10" className="h-[10px] w-2" fill="none" stroke="currentColor" strokeWidth="1.800"><path d="M6 1 2 5l4 4" /></svg>
        <span className="mr-auto ml-[5px] h-full w-[97px] bg-[#cdcdcd]" />
        <svg viewBox="0 0 8 10" className="h-[10px] w-2" fill="none" stroke="currentColor" strokeWidth="1.800"><path d="m2 1 4 4-4 4" /></svg>
      </div>
      <div className="flex h-[35px] shrink-0 items-center gap-[10px] pl-[6px] text-[#2b333b]">
        <button type="button" aria-label="Save current view"><Icon name="addview" /></button>
        <button type="button" aria-label="Clone folder"><Icon name="cloneview" /></button>
        <button type="button" aria-label="New folder"><Icon name="addfolder" /></button>
        <button type="button" aria-label="View settings"><Icon name="props" /></button>
        <button type="button" aria-label="Delete" className="ml-1"><Icon name="cross" size={14} /></button>
      </div>
      <button type="button" className="ml-[2px] flex h-[22px] shrink-0 items-center gap-[9px] rounded-l bg-[#d6d6d6] pl-[6px] text-left">
        <span className="text-gray-700"><Caret /></span>
        Properties
      </button>
      <label className="mt-1 flex h-[19px] shrink-0 items-center pl-1 text-[#2b333b]">
        <Icon name="folder" size={14} />
        <input aria-label="View ID" defaultValue="QA" className="ml-1 h-full w-full border border-r-0 border-gray-500 bg-white px-[3px] text-black" />
      </label>
      <div className="h-[88px] shrink-0" />
    </aside>
  );
}

const fieldBox = 'h-[23px] w-full border border-gray-500 bg-white';

function Select({ id, value }: { id: string; value: string }) {
  return (
    <div className="relative w-full">
      <select id={id} className={`${fieldBox} appearance-none px-[5px]`}>
        <option>{value}</option>
      </select>
      <svg viewBox="0 0 8 6" className="pointer-events-none absolute top-[9px] right-[5px] h-[6px] w-2 overflow-visible" fill="none" stroke="#444">
        <path d="M0 1l4 4 4-4" />
      </svg>
    </div>
  );
}

function Header({ title, closed }: { title: string; closed?: boolean }) {
  return (
    <button type="button" className="flex h-[22px] w-full shrink-0 items-center gap-[6px] rounded-sm bg-[#d6d6d6] pl-[6px] text-left font-bold">
      <span className="text-gray-700"><Caret dir={closed ? 'right' : 'down'} /></span>
      {title}
    </button>
  );
}

function Row({ id, icon, label, value }: { id: string; icon: string; label: string; value: string }) {
  return (
    <div className="grid h-[23px] grid-cols-[230px_1fr] items-center">
      <label htmlFor={id} className="flex items-center gap-1">
        <Icon name={icon} size={16} />
        {label}
      </label>
      <Select id={id} value={value} />
    </div>
  );
}

const generalRows = [
  { id: 'layers', icon: 'layers', label: 'Layer Combination:', value: 'A-00-All layers' },
  { id: 'scale', icon: 'scale', label: 'Scale:', value: '1:100' },
  { id: 'structure', icon: 'structure', label: 'Structure Display:', value: 'Entire Model' },
  { id: 'pens', icon: 'pen', label: 'Pen Set:', value: '00-Working' },
  { id: 'mvo', icon: 'modelview', label: 'Model View Options:', value: '00-Working' },
  { id: 'override', icon: 'override', label: 'Graphic Override:', value: 'No Overrides' },
  { id: 'renovation', icon: 'renovation', label: 'Renovation Filter:', value: '05-Proposed' },
];

function SaveViewDialog() {
  const [name, setName] = useState('GF-1 decimal');
  const [ignoreZoom, setIgnoreZoom] = useState(true);

  return (
    <div role="dialog" aria-label="Save View" className="absolute top-24 right-[238px] w-[512px] border border-gray-500 bg-[#efefef] text-[11px] shadow-[0_6px_24px_rgba(0,0,0,0.4)]">
      <div className="flex h-[30px] items-center bg-white pl-[9px]">
        <svg viewBox="0 0 16 16" className="size-4" fill="none">
          <rect y="8" width="14" height="7" fill="#e4ecf6" />
          <path d="M1 13C4 7 5 3 8 3c3-1 4 2 4 3" stroke="#4363c4" strokeWidth="2" />
          <path d="M12.500 7v4" stroke="#2b3a70" strokeWidth="1.500" strokeDasharray="2 1" />
        </svg>
        <h1 className="ml-1">Save View</h1>
        <button type="button" aria-label="Help" className="mr-[7px] ml-auto w-10 text-sm">?</button>
        <button type="button" aria-label="Close" className="mr-[6px] flex w-[35px] justify-center">
          <svg viewBox="0 0 12 12" className="size-3" stroke="#111" strokeWidth="1.100"><path d="m1 1 10 10M11 1 1 11" /></svg>
        </button>
      </div>

      <div className="px-[15px] pt-[10px] pb-[11px]">
        <Header title="IDENTIFICATION" />
        <div className="mt-[5px] grid grid-cols-[100px_120px_1fr] items-center gap-y-[7px]">
          <label htmlFor="id-mode">ID:</label>
          <Select id="id-mode" value="By Project Map" />
          <input aria-label="ID value" readOnly value="0." className="ml-[10px] h-[23px] border border-t-gray-400 border-r-white border-b-white border-l-gray-400" />
          <label htmlFor="name-mode">Name:</label>
          <Select id="name-mode" value="Custom" />
          <div className="relative ml-[10px]">
            <input
              aria-label="Name value"
              value={name}
              onChange={(e) => setName(e.target.value)}
              className="h-[23px] w-full border border-[#1a6fb8] bg-white px-[3px] caret-transparent outline-none"
            />
            <span className="pointer-events-none absolute top-[5px] left-[70px] h-[13px] w-px bg-black" />
          </div>
          <label htmlFor="source">Source:</label>
          <input id="source" readOnly value="0. GF-Ground Floor" className="col-span-2 h-[23px] border border-t-gray-400 border-r-white border-b-white border-l-gray-400" />
        </div>

        <div className="mt-[7px] mb-[5px]"><Header title="GENERAL" /></div>
        <div className="flex flex-col gap-[7px]">
          {generalRows.map((r) => (
            <Row key={r.id} {...r} />
          ))}
        </div>
        <p className="mt-[7px] h-[68px] leading-[13px]">
          Note: Regardless of this view's scale, GDL objects will be represented according to the source viewpoint's scale.
        </p>

        <Header title="DESIGN OPTIONS" />
        <div className="mt-[5px] mb-[13px]">
          <Row id="option" icon="options" label="Option Combination:" value="Main Model Only" />
        </div>

        <Header title="2D/3D DOCUMENTS" />
        <button type="button" className="mx-px mt-[6px] mb-2 block h-[22px] w-[478px] border border-[#adadad] bg-[#e1e1e1]">
          Floor Plan Cut Plane Settings...
        </button>
        <div className="relative">
          <Row id="dimensioning" icon="dimension" label="Dimensioning:" value="Mill - 1 Decimal" />
          <span className="pointer-events-none absolute -top-[14px] -right-[5px] -bottom-2 -left-[11px] border-[5px] border-[#ff7f27]" />
        </div>
        <div className="mt-[7px]">
          <Row id="zooming" icon="zoom" label="Zooming:" value="Current Zoom" />
        </div>
        <label className="mt-[7px] mb-[5px] flex h-[23px] items-center gap-[3px]">
          <span className="relative flex size-[13px]">
            <input
              type="checkbox"
              checked={ignoreZoom}
              onChange={(e) => setIgnoreZoom(e.target.checked)}
              className="size-[13px] appearance-none border border-gray-700 bg-white"
            />
            {ignoreZoom && (
              <svg viewBox="0 0 13 13" className="pointer-events-none absolute inset-0" fill="none" stroke="#222" strokeWidth="1.200">
                <path d="m2.500 6.500 3 3 5-6" />
              </svg>
            )}
          </span>
          Ignore zoom and rotation when opening this view
        </label>

        <Header title="3D ONLY" closed />
        <div className="mt-[5px] mb-[5px]"><Header title="STRUCTURAL ANALYSIS" /></div>
        <Row id="analytic" icon="analytic" label="Structural Analytical Model:" value="Disabled" />
        <div className="mt-[7px] grid h-[23px] grid-cols-[230px_1fr] items-center">
          <label htmlFor="load-case" className="flex items-center gap-1">
            <Icon name="loadcase" size={16} />
            Load Case:
          </label>
          <button id="load-case" type="button" className="mx-px flex h-[21px] items-center justify-between border border-[#adadad] bg-[#e1e1e1] pr-px pl-[3px]">
            Show All
            <Caret dir="right" />
          </button>
        </div>

        <div className="mt-[22px] flex justify-end gap-3 border-t border-gray-400 pt-3">
          <button type="button" className="h-[21px] w-[88px] border border-[#adadad] bg-[#e1e1e1]">Cancel</button>
          <div className="relative mr-px">
            <button type="button" className="block h-[21px] w-[88px] border-2 border-[#1a6fb8] bg-[#e1e1e1] leading-[17px]">Create</button>
            <span className="pointer-events-none absolute -top-[14px] -right-[9px] -bottom-[7px] -left-[17px] border-[5px] border-[#ff7f27]" />
          </div>
        </div>
      </div>
    </div>
  );
}

export default function App() {
  return (
    <div className="relative flex h-screen flex-col overflow-hidden bg-[#efefef] font-['Open_Sans','Noto_Sans',sans-serif] text-black">
      <MenuBar />
      <Toolbar />
      <InfoBox />
      <div className="flex min-h-0 flex-1">
        <Toolbox />
        <main className="flex min-w-0 flex-1 flex-col">
          <TabBar />
          <Canvas />
          <QuickOptions />
        </main>
        <Navigator />
      </div>
      <footer className="shrink-0 border-t border-[#d5d5d5]">
        <div className="flex h-[22px] items-center text-[11px]">
          <span>Enter First Dimension Node Point.</span>
          <span className="mr-1 ml-auto text-[#2b333b]"><Icon name="windows" size={18} /></span>
          <a href="#id" className="flex h-full w-[130px] items-center justify-center border-x border-[#d5d5d5] font-['Lato',sans-serif] text-[13px] text-gray-700">
            <span className="font-bold">GRAPHISOFT</span>&nbsp;ID
          </a>
          <span className="w-5" />
        </div>
        <div className="flex h-px">
          <span className="w-[46px] bg-[#3a1030]" />
          <span className="w-72 bg-gray-400" />
          <span className="flex-1 bg-[#3a1030]" />
        </div>
      </footer>
      <SaveViewDialog />
      {/* callout around the dimension preset in the bottom bar */}
      <span className="pointer-events-none absolute right-[168px] bottom-4 h-9 w-[159px] border-[5px] border-[#ff7f27]" />
    </div>
  );
}
